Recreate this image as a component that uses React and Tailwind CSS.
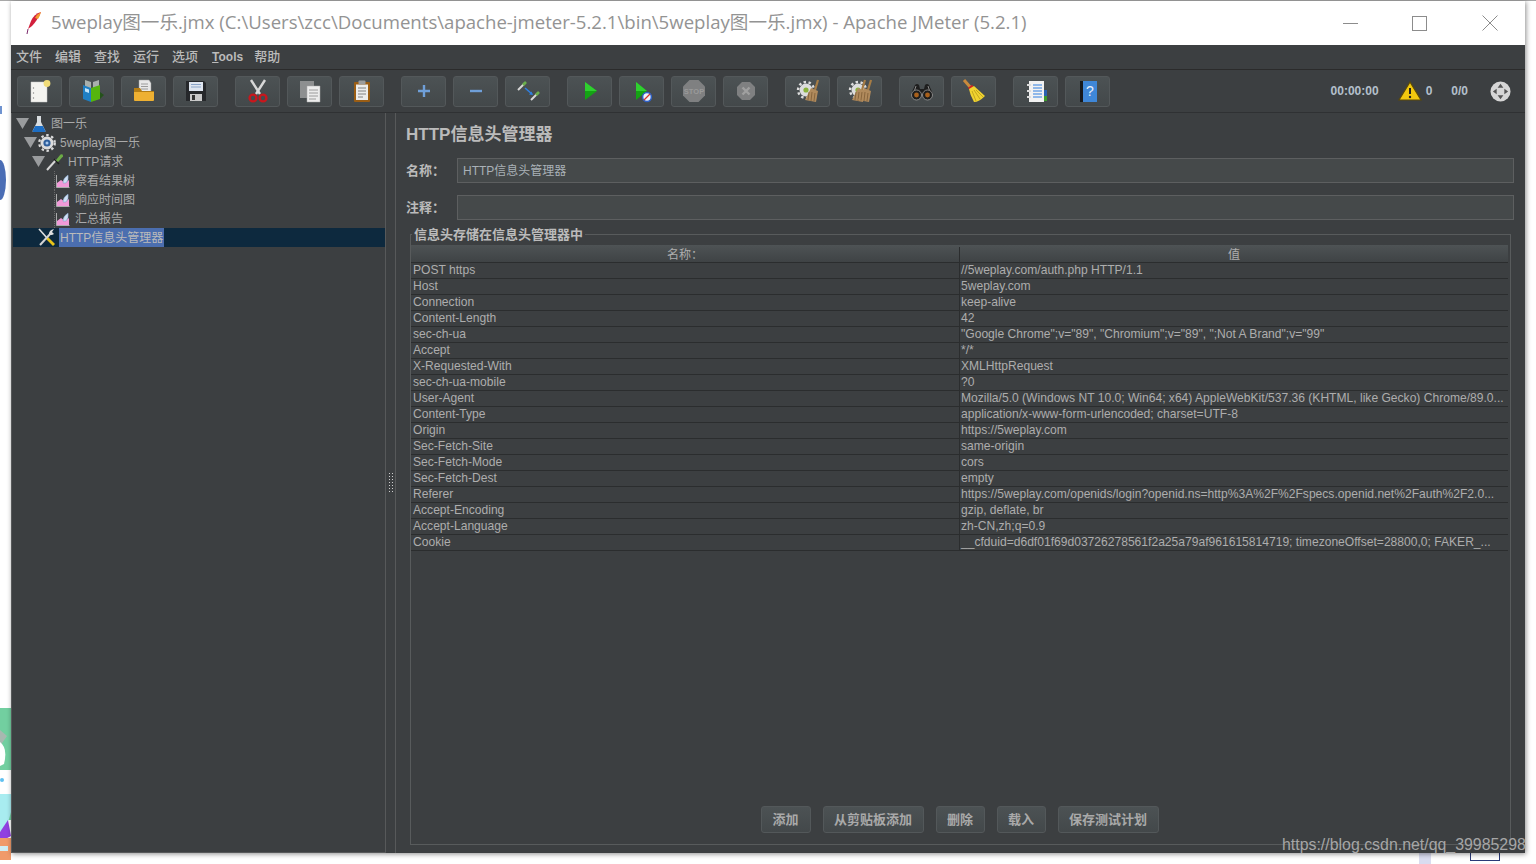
import React from 'react';

const font = "font-['Liberation_Sans','Noto_Sans_CJK_SC',sans-serif]";

const headers = [
  ['POST https', '//5weplay.com/auth.php HTTP/1.1'],
  ['Host', '5weplay.com'],
  ['Connection', 'keep-alive'],
  ['Content-Length', '42'],
  ['sec-ch-ua', '"Google Chrome";v="89", "Chromium";v="89", ";Not A Brand";v="99"'],
  ['Accept', '*/*'],
  ['X-Requested-With', 'XMLHttpRequest'],
  ['sec-ch-ua-mobile', '?0'],
  ['User-Agent', 'Mozilla/5.0 (Windows NT 10.0; Win64; x64) AppleWebKit/537.36 (KHTML, like Gecko) Chrome/89.0...'],
  ['Content-Type', 'application/x-www-form-urlencoded; charset=UTF-8'],
  ['Origin', 'https://5weplay.com'],
  ['Sec-Fetch-Site', 'same-origin'],
  ['Sec-Fetch-Mode', 'cors'],
  ['Sec-Fetch-Dest', 'empty'],
  ['Referer', 'https://5weplay.com/openids/login?openid.ns=http%3A%2F%2Fspecs.openid.net%2Fauth%2F2.0...'],
  ['Accept-Encoding', 'gzip, deflate, br'],
  ['Accept-Language', 'zh-CN,zh;q=0.9'],
  ['Cookie', '__cfduid=d6df01f69d03726278561f2a25a79af961615814719; timezoneOffset=28800,0; FAKER_...'],
];

const Svg = ({ children, size = 24 }) => (
  <svg width={size} height={size} viewBox="0 0 24 24">{children}</svg>
);

const Gear = ({ x = 0, y = 0 }) => (
  <g transform={`translate(${x} ${y})`}>
    <circle cx="9" cy="9" r="6.5" fill="#dcdcdc" />
    <circle cx="9" cy="9" r="8" fill="none" stroke="#dcdcdc" strokeWidth="2.4" strokeDasharray="2.5 2.5" />
    <circle cx="9" cy="9" r="2.6" fill="#8ab23c" />
  </g>
);

const Broom = ({ x = 0 }) => (
  <g transform={`translate(${x} 0)`}>
    <path d="M20 1 L17 11" stroke="#a67c45" strokeWidth="2.2" />
    <path d="M13 9 L20 12 L18 23 L7 21 Z" fill="#b08a5c" />
    <path d="M11 13 L10 21 M14 13 L13 22 M17 14 L16 22" stroke="#7d5c35" strokeWidth="0.8" />
  </g>
);

const icons = {
  newFile: (
    <Svg>
      <path d="M3 3 H19 V23 H3 Z" fill="#f4f4f0" stroke="#c8c8c8" strokeWidth="0.5" />
      <circle cx="19" cy="4.5" r="3.4" fill="#f0dc78" />
      <circle cx="5.5" cy="9" r="0.7" fill="#888" />
      <circle cx="5.5" cy="14" r="0.7" fill="#888" />
      <circle cx="5.5" cy="19" r="0.7" fill="#888" />
    </Svg>
  ),
  templates: (
    <Svg>
      <path d="M5 1 L11 3 V10 H5 Z M13 3 L19 1 V10 H13 Z" fill="#a9b0ac" />
      <path d="M3 6 L11 9 V23 L3 20 Z" fill="#1f7fc4" />
      <path d="M11 9 L20 6 V20 L11 23 Z" fill="#55b50e" />
      <path d="M5 9 L9 10.5 V14 L5 12.5 Z" fill="#bfe3fa" />
      <path d="M20 13 L24 16 L20 20 Z" fill="#24521a" />
    </Svg>
  ),
  open: (
    <Svg>
      <path d="M7 1 H17 L19 4 V13 H7 Z" fill="#e8e8e8" stroke="#999" strokeWidth="0.5" />
      <path d="M9 5 H16 M9 7.5 H16 M9 10 H16" stroke="#888" strokeWidth="0.8" />
      <path d="M2 9 H8 L10 12 H22 V21 H2 Z" fill="#b47d14" />
      <path d="M2 13 H22 V21 Q22 22 21 22 H3 Q2 22 2 21 Z" fill="#eeb032" />
    </Svg>
  ),
  save: (
    <Svg>
      <path d="M2 2 H20 L22 4 V22 H2 Z" fill="#26282b" />
      <rect x="5" y="3" width="14" height="9" fill="#dfe6f0" />
      <path d="M7 5.5 H17 M7 8 H17" stroke="#8aa4c8" strokeWidth="1" />
      <rect x="6" y="15" width="12" height="7" fill="#c9c9c9" />
      <rect x="8" y="16" width="3" height="5" fill="#333" />
    </Svg>
  ),
  cut: (
    <Svg>
      <path d="M5 1 L14 15 M19 1 L10 15" stroke="#d8d8d8" strokeWidth="2.4" />
      <circle cx="7" cy="19" r="3.4" fill="none" stroke="#c8171d" strokeWidth="2.4" />
      <circle cx="17" cy="19" r="3.4" fill="none" stroke="#c8171d" strokeWidth="2.4" />
    </Svg>
  ),
  copy: (
    <Svg>
      <rect x="2" y="2" width="14" height="17" fill="#8d8f90" />
      <path d="M9 7 H22 V23 H9 Z" fill="#ececec" stroke="#aaa" strokeWidth="0.5" />
      <path d="M11 11 H20 M11 14 H20 M11 17 H20 M11 20 H18" stroke="#888" strokeWidth="0.8" />
    </Svg>
  ),
  paste: (
    <Svg>
      <rect x="4" y="3" width="16" height="20" rx="1" fill="#9a5d14" />
      <rect x="6" y="5.5" width="12" height="15.5" fill="#ececec" />
      <rect x="8.5" y="1.5" width="7" height="4" rx="1" fill="#9c9c9c" />
      <path d="M8 9 H16 M8 12 H16 M8 15 H16 M8 18 H13" stroke="#777" strokeWidth="0.9" />
    </Svg>
  ),
  plus: (
    <Svg>
      <path d="M12 6 V18 M6 12 H18" stroke="#6f9fd8" strokeWidth="2.4" />
    </Svg>
  ),
  minus: (
    <Svg>
      <path d="M6 12 H18" stroke="#6f9fd8" strokeWidth="2.4" />
    </Svg>
  ),
  toggle: (
    <Svg>
      <path d="M2 11 L9 4" stroke="#d8d8d8" strokeWidth="2" />
      <path d="M7 6 L10 3" stroke="#6bb04c" strokeWidth="2.6" />
      <path d="M15 21 L22 14" stroke="#d8d8d8" strokeWidth="2" />
      <path d="M20 16 L23 13" stroke="#6bb04c" strokeWidth="2.6" />
      <path d="M9 9 L16 15" stroke="#2f7fe0" strokeWidth="1.6" />
      <path d="M17 16 L13 15.5 L15.5 12.5 Z" fill="#2f7fe0" />
    </Svg>
  ),
  play: (
    <Svg>
      <path d="M7 3 L19 12 L7 21 Z" fill="#14a314" />
      <path d="M7 3 L19 12 L7 12 Z" fill="#2fd02f" />
    </Svg>
  ),
  playNoTimer: (
    <Svg>
      <path d="M6 3 L17 12 L6 21 Z" fill="#14a314" />
      <path d="M6 3 L17 12 L6 12 Z" fill="#2fd02f" />
      <circle cx="17" cy="18" r="4.4" fill="#f0f4fa" stroke="#2f62c8" strokeWidth="1.5" />
      <path d="M14 21 L20 15" stroke="#d8342c" strokeWidth="1.3" />
    </Svg>
  ),
  stop: (
    <Svg>
      <path d="M7.5 1 H16.5 L23 7.5 V16.5 L16.5 23 H7.5 L1 16.5 V7.5 Z" fill="#7f8081" />
      <text x="12" y="15" textAnchor="middle" fontSize="7.5" fontWeight="700" fill="#9a9a9a" fontFamily="Liberation Sans">STOP</text>
    </Svg>
  ),
  shutdown: (
    <Svg>
      <path d="M8 3 H16 L21 8 V16 L16 21 H8 L3 16 V8 Z" fill="#7f8081" />
      <path d="M8.5 8.5 L15.5 15.5 M15.5 8.5 L8.5 15.5" stroke="#a0a0a0" strokeWidth="2.4" />
    </Svg>
  ),
  clear: (
    <Svg>
      <Gear x={1} y={2} />
      <Broom x={2} />
    </Svg>
  ),
  clearAll: (
    <Svg>
      <Gear x={1} y={2} />
      <Broom x={-3} />
      <Broom x={3} />
    </Svg>
  ),
  search: (
    <Svg>
      <path d="M5 6 Q7 4 9 6 L10 10 H14 L15 6 Q17 4 19 6 L23 15 H1 Z" fill="#1e1e1e" />
      <path d="M6 7 L4 13 M18 7 L20 13" stroke="#8a8a8a" strokeWidth="1" />
      <circle cx="6.5" cy="16" r="5" fill="#1e1e1e" stroke="#9a9a9a" strokeWidth="0.8" />
      <circle cx="17.5" cy="16" r="5" fill="#1e1e1e" stroke="#9a9a9a" strokeWidth="0.8" />
      <circle cx="6.5" cy="16" r="2.4" fill="#a8601c" />
      <circle cx="17.5" cy="16" r="2.4" fill="#a8601c" />
    </Svg>
  ),
  reset: (
    <Svg>
      <path d="M2 1 L9 9" stroke="#c98a3c" strokeWidth="3" />
      <path d="M7 10 L11 7" stroke="#d2231f" strokeWidth="3" />
      <path d="M7 10 L12 7 L23 17 Q17 23 12 23 Q8 16 7 10 Z" fill="#f0d330" />
      <path d="M10 12 L14 22 M12 11 L18 20 M14 11 L21 18" stroke="#b89a18" strokeWidth="0.8" />
    </Svg>
  ),
  list: (
    <Svg>
      <rect x="5" y="2" width="15" height="21" fill="#f2f2f2" />
      <rect x="20" y="11" width="3" height="6" fill="#2a62b0" />
      <rect x="20" y="17" width="3" height="5" fill="#3c9a2c" />
      <path d="M9 6 H18 M9 9 H18 M9 12 H18 M9 15 H18 M9 18 H18" stroke="#2f7fe0" strokeWidth="1.2" />
      <path d="M3 6 H7 M3 12 H7 M3 18 H7" stroke="#dcdcdc" strokeWidth="2" />
    </Svg>
  ),
  help: (
    <Svg>
      <rect x="4" y="2" width="4" height="21" fill="#17191c" />
      <rect x="7" y="2" width="14" height="21" fill="#3f87d8" />
      <text x="14" y="17" textAnchor="middle" fontSize="14" fill="#e8f0fa" fontFamily="Liberation Sans">?</text>
    </Svg>
  ),
};

const toolbarGroups = [
  ['newFile', 'templates', 'open', 'save'],
  ['cut', 'copy', 'paste'],
  ['plus', 'minus', 'toggle'],
  ['play', 'playNoTimer', 'stop', 'shutdown'],
  ['clear', 'clearAll'],
  ['search', 'reset'],
  ['list', 'help'],
];

const Flask = () => (
  <svg width="14" height="18" viewBox="0 0 14 18">
    <path d="M5 1 H9 V7 L13.5 16 Q13.5 17 12.5 17 H1.5 Q0.5 17 0.5 16 L5 7 Z" fill="#d9dde0" />
    <path d="M3.2 11 H10.8 L13.5 16 Q13.5 17 12.5 17 H1.5 Q0.5 17 0.5 16 Z" fill="#1d6ec4" />
  </svg>
);

const TreeGear = () => (
  <svg width="18" height="18" viewBox="0 0 18 18">
    <circle cx="9" cy="9" r="6.5" fill="#dcdcdc" />
    <circle cx="9" cy="9" r="7.8" fill="none" stroke="#dcdcdc" strokeWidth="2.2" strokeDasharray="2.5 2.6" />
    <circle cx="9" cy="9" r="3.6" fill="#2f5f9c" />
    <circle cx="9" cy="9" r="1.5" fill="#a8c8ec" />
  </svg>
);

const Pipette = () => (
  <svg width="18" height="18" viewBox="0 0 18 18">
    <path d="M1 17 L10 7" stroke="#d6d6d6" strokeWidth="2" />
    <path d="M8 6 L13 11" stroke="#1c1c1c" strokeWidth="1.4" />
    <path d="M10 7 L14.5 1.5 Q17.5 0.5 17 3.5 L12 9 Z" fill="#6cab46" />
  </svg>
);

const ChartIcon = () => (
  <svg width="14" height="14" viewBox="0 0 14 14">
    <path d="M1 13 V9 L5 6 L9 9 L13 6 V13 Z" fill="#f09ad8" />
    <path d="M7 9 Q7 4 12 1 Q13 6 10 9 Z" fill="#cfe0f4" stroke="#7e9ec6" strokeWidth="0.5" />
    <path d="M0.5 1 V13.5 H13.5" fill="none" stroke="#c8c8c8" strokeWidth="0.8" />
  </svg>
);

const Tools = () => (
  <svg width="19" height="19" viewBox="0 0 19 19">
    <path d="M2 1 L10 10" stroke="#e0e0e0" strokeWidth="1.6" />
    <path d="M10 10 L17 17" stroke="#e8c318" strokeWidth="2.8" />
    <path d="M3 17 L14 5" stroke="#d4d4d4" strokeWidth="2" />
    <path d="M12 6 Q12 2 17 1 L15 4 L17 6 Q14 8 12 6 Z" fill="#e0e0e0" />
  </svg>
);

const Arrow = () => (
  <svg width="13" height="11" viewBox="0 0 13 11" className="shrink-0">
    <path d="M0 0 H13 L6.5 11 Z" fill="#9a9c9e" />
  </svg>
);

const TreeRow = ({ indent, arrow, arrowGap = 'mr-px', icon, label, labelGap = 'ml-[4px]', selected }) => (
  <div className={`flex h-[19px] items-center ${indent} ${selected ? 'bg-[#0d293e]' : ''}`}>
    {arrow && <span className={`${arrowGap} flex`}><Arrow /></span>}
    <span className="flex shrink-0 items-center">{icon}</span>
    <span className={`${labelGap} whitespace-nowrap pt-[2px] text-[12px] leading-[17px] ${selected ? 'bg-[#4b6eaf] px-px text-[#bbbbbb]' : 'text-[#a9a9a9]'}`}>
      {label}
    </span>
  </div>
);

const ChartRow = ({ label }) => (
  <div className="flex h-[19px] items-center pl-[41px]">
    <span className="h-[19px] border-l border-dotted border-[#6a6a6a]" />
    <span className="ml-[1px] flex shrink-0"><ChartIcon /></span>
    <span className="ml-[5px] whitespace-nowrap pt-[2px] text-[12px] leading-[17px] text-[#a9a9a9]">{label}</span>
  </div>
);

const FormButton = ({ label, width }) => (
  <button className={`h-[27px] ${width} rounded-[3px] border border-[#53585a] bg-gradient-to-b from-[#4c5254] to-[#43484a] text-[13px] font-bold text-[#a9a9a9]`}>
    {label}
  </button>
);

const Field = ({ label, value, className }) => (
  <div className={`flex h-[25px] items-center ${className}`}>
    <span className="w-[51px] shrink-0 text-[13px] font-bold text-[#bbbbbb]">{label}</span>
    <div className="flex h-[25px] flex-1 items-center border border-[#5d5f60] bg-[#45494a] pl-[5px] text-[12px] text-[#a9b1b7]">
      {value}
    </div>
  </div>
);

export default function App() {
  return (
    <div className={`relative h-[864px] w-[1536px] overflow-hidden bg-white pl-[11px] pt-px ${font}`}>
      {/* bits of the desktop showing around the window */}
      <div className="absolute left-0 top-[160px] h-[40px] w-[6px] rounded-r-[6px_20px] bg-[#4a6db5]" />
      <div className="absolute left-0 top-[106px] h-[8px] w-[2px] bg-[#6f93d0]" />
      <svg width="17" height="156" viewBox="0 0 17 156" className="absolute left-0 top-[708px]">
        <rect width="17" height="156" fill="#ffffff" />
        <rect width="17" height="112" fill="#72cfa0" />
        <path d="M0 22 L7 28 L0 38 Z" fill="#a8b8b0" />
        <path d="M0 34 Q8 40 4 56 L0 58 Z" fill="#ffffff" />
        <rect y="62" width="11" height="34" fill="#ffffff" />
        <circle cx="2" cy="72" r="2" fill="#5fc0f0" />
        <path d="M0 86 H11 V104 Q8 118 0 124 Z" fill="#a8ecf0" />
        <path d="M0 124 L8 112 L11 128 L0 134 Z" fill="#9040e0" />
        <path d="M0 130 H11 V152 H0 Z" fill="#f09a6a" />
        <rect y="138" width="8" height="5" fill="#cfeef5" />
      </svg>
      <div className="absolute left-[1419px] top-[853px] h-[11px] w-[12px] bg-[#d9dcf0]" />
      <div className="absolute left-[1470px] top-[853px] h-[8px] w-[30px] border-x border-b border-[#2a3a78]" />
      <div className="absolute left-0 top-0 h-px w-full bg-[#a8a8a8]" />

      <div className="relative flex h-[852px] w-[1514px] flex-col bg-[#3c3f41] shadow-[1px_1px_5px_rgba(0,0,0,0.45)]">
        {/* title bar */}
        <div className="flex h-[44px] shrink-0 items-center bg-white pl-[15px]">
          <svg width="16" height="24" viewBox="0 0 16 24">
            <path d="M15 1 Q8 3 5 10 L2 18 L6 15 Q11 10 15 1 Z" fill="#d2203c" />
            <path d="M15 1 Q11 3 9 7 L12 8 Q14 5 15 1 Z" fill="#f29c2e" />
            <path d="M2 18 L1 23" stroke="#7c2a6c" strokeWidth="1" />
          </svg>
          <span className="-mt-[2px] ml-[9px] whitespace-nowrap font-['Open_Sans','Noto_Sans_CJK_SC',sans-serif] text-[18.6px] text-[#939393]">
            5weplay图一乐.jmx (C:\Users\zcc\Documents\apache-jmeter-5.2.1\bin\5weplay图一乐.jmx) - Apache JMeter (5.2.1)
          </span>
          <div className="ml-auto flex items-center">
            <span className="h-px w-[15px] bg-[#8c8c8c]" />
            <span className="ml-[54px] h-[15px] w-[15px] border border-[#8c8c8c]" />
            <svg width="16" height="16" viewBox="0 0 16 16" className="ml-[55px] mr-[27px]">
              <path d="M0.5 0.5 L15.5 15.5 M15.5 0.5 L0.5 15.5" stroke="#8c8c8c" strokeWidth="1" />
            </svg>
          </div>
        </div>

        {/* menu bar */}
        <div className="flex h-[25px] shrink-0 items-center gap-[13px] border-b border-[#2b2b2b] pl-[5px] text-[13px] font-medium text-[#bbbbbb]">
          <span>文件</span>
          <span>编辑</span>
          <span>查找</span>
          <span>运行</span>
          <span>选项</span>
          <span className="ml-px text-[12px] font-bold"><span className="underline">T</span>ools</span>
          <span className="-ml-[2px]">帮助</span>
        </div>

        {/* toolbar */}
        <div className="flex h-[43px] shrink-0 items-center gap-[17px] border-b border-[#2f3133] pl-[6px]">
          {toolbarGroups.map((group, i) => (
            <div key={i} className="flex gap-[7px]">
              {group.map((name) => (
                <div key={name} className="flex h-[31px] w-[45px] items-center justify-center rounded-[3px] border border-[#53585a] bg-gradient-to-b from-[#4c5254] to-[#43484a]">
                  {icons[name]}
                </div>
              ))}
            </div>
          ))}
          <div className="ml-auto flex items-center pr-[14px] text-[12px] font-bold text-[#b4c0cc]">
            <span>00:00:00</span>
            <svg width="24" height="20" viewBox="0 0 24 20" className="ml-[19px]">
              <path d="M12 1 L23 19 H1 Z" fill="#f2c80f" stroke="#5c4a08" strokeWidth="1.2" />
              <path d="M12 7 V13" stroke="#222" strokeWidth="2" />
              <circle cx="12" cy="16" r="1.2" fill="#222" />
            </svg>
            <span className="ml-[4px]">0</span>
            <span className="ml-[19px]">0/0</span>
            <svg width="21" height="21" viewBox="0 0 22 22" className="ml-[22px]">
              <circle cx="11" cy="11" r="10.5" fill="#d6d6d6" />
              <path d="M11 3 L14 7 H8 Z M11 19 L14 15 H8 Z M3 11 L7 8 V14 Z M19 11 L15 8 V14 Z" fill="#555" />
            </svg>
          </div>
        </div>

        {/* main split */}
        <div className="flex min-h-0 flex-1">
          {/* tree */}
          <div className="w-[375px] shrink-0 border-b border-r border-l border-[#57595a] pl-px pt-[1px]">
            <TreeRow indent="pl-[3px]" arrow arrowGap="mr-[3px]" icon={<Flask />} label="图一乐" labelGap="ml-[5px]" />
            <TreeRow indent="pl-[11px]" arrow icon={<TreeGear />} label="5weplay图一乐" />
            <TreeRow indent="pl-[19px]" arrow icon={<Pipette />} label="HTTP请求" />
            <ChartRow label="察看结果树" />
            <ChartRow label="响应时间图" />
            <ChartRow label="汇总报告" />
            <TreeRow indent="pl-[24px]" icon={<Tools />} label="HTTP信息头管理器" labelGap="ml-[3px]" selected />
          </div>

          {/* splitter */}
          <div className="flex w-[10px] shrink-0 items-center justify-center border-r border-[#57595a]">
            <div className="h-[22px] w-[6px] bg-[radial-gradient(#d0d0d0_1px,transparent_1px)] bg-[length:3px_3px]" />
          </div>

          {/* header manager panel */}
          <div className="flex min-w-0 flex-1 flex-col pb-[8px] pl-[10px] pr-[11px]">
            <h1 className="mt-[9px] h-[26px] text-[17px] font-bold leading-[26px] text-[#bbbbbb]">HTTP信息头管理器</h1>
            <Field className="mt-[10px]" label="名称：" value="HTTP信息头管理器" />
            <Field className="mt-[12px]" label="注释：" value="" />
            <fieldset className="ml-[4px] mr-[3px] mt-[7px] flex min-h-0 flex-1 flex-col border border-[#585b5c] pb-[11px]">
              <legend className="ml-[1px] px-[2px] text-[13px] font-bold leading-[15px] text-[#bbbbbb]">信息头存储在信息头管理器中</legend>
              <div className="mr-[2px] mt-[3px] text-[12.08px] leading-[15px] text-[#adadad]">
                <div className="grid h-[18px] grid-cols-[549px_1fr] border-b border-[#2b2d2e] bg-gradient-to-b from-[#4e5355] to-[#3f4345] pt-[2px] text-center">
                  <span className="border-r border-[#2b2d2e] pt-px">名称：</span>
                  <span className="pt-px">值</span>
                </div>
                {headers.map(([name, value]) => (
                  <div key={name} className="grid h-[16px] grid-cols-[549px_1fr] border-b border-[#2b2d2e]">
                    <span className="truncate border-r border-[#2b2d2e] pl-[2px]">{name}</span>
                    <span className="truncate whitespace-nowrap pl-px">{value}</span>
                  </div>
                ))}
              </div>
              <div className="mt-auto flex justify-center gap-[12px] pr-[2px]">
                <FormButton label="添加" width="w-[50px]" />
                <FormButton label="从剪贴板添加" width="w-[101px]" />
                <FormButton label="删除" width="w-[49px]" />
                <FormButton label="载入" width="w-[49px]" />
                <FormButton label="保存测试计划" width="w-[101px]" />
              </div>
            </fieldset>
          </div>
        </div>
      </div>

      {/* csdn watermark */}
      <div className="absolute left-[1282px] top-[835px] whitespace-nowrap text-[15.9px] leading-[19px] text-[#a6a6a6]">
        https://blog.csdn.net/qq_39985298
      </div>
    </div>
  );
}
